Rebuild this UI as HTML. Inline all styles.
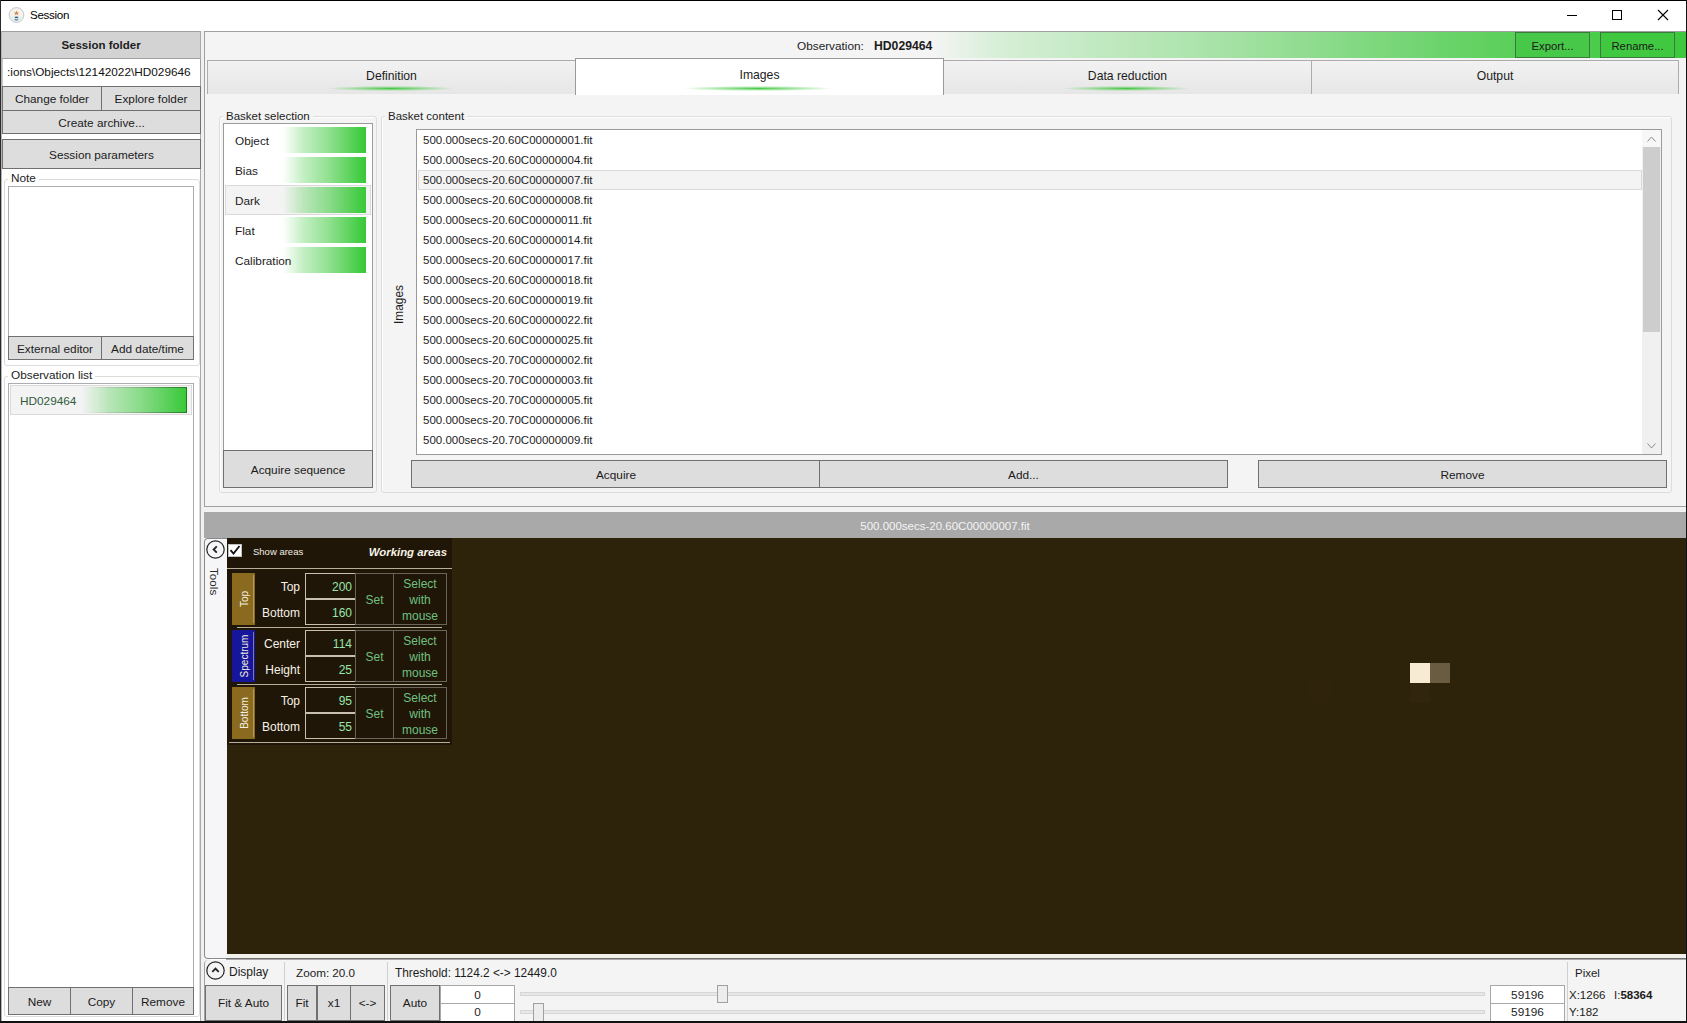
<!DOCTYPE html>
<html><head><meta charset="utf-8">
<style>
*{box-sizing:border-box;margin:0;padding:0}
html,body{width:1687px;height:1023px;overflow:hidden;background:#fff;font-family:"Liberation Sans",sans-serif;font-size:11.8px;color:#1c1c1c}
.a{position:absolute}
.btn{position:absolute;background:#dddddd;border:1px solid #707070;display:flex;align-items:center;justify-content:center;white-space:nowrap;color:#1b1b1b}
.t{position:absolute;white-space:nowrap;line-height:14px}
.gb{position:absolute;border:1px solid #dcdcdc;border-radius:3px}
.lbl{position:absolute;white-space:nowrap;line-height:14px;padding:0 3px}
.gb2{position:absolute;border:1px solid #dcdcdc;border-radius:3px;box-shadow:inset 1px 1px 0 #fff}
.tab{background:linear-gradient(#f2f2f2,#e6e6e6);border:1px solid #acacac;border-bottom:none}
.glow{height:5px;background:radial-gradient(closest-side,rgba(50,195,50,0.9) 0%,rgba(60,200,60,0.45) 50%,rgba(60,200,60,0) 100%)}
.gbar{position:absolute;left:283px;width:83px;height:26px;background:#36c836;-webkit-mask-image:linear-gradient(90deg,transparent 0,rgba(0,0,0,.3) 25%,rgba(0,0,0,.55) 55%,#000 100%)}
</style></head><body>
<!-- window frame -->
<div class="a" style="left:0;top:0;width:1687px;height:1px;background:#000"></div>
<div class="a" style="left:0;top:0;width:1px;height:1023px;background:#2a2a2a"></div>
<div class="a" style="left:1686px;top:0;width:1px;height:1023px;background:#111"></div>
<div class="a" style="left:0;top:1021px;width:1687px;height:2px;background:#111"></div>

<!-- title bar -->
<div id="title">
 <svg class="a" style="left:8px;top:7px" width="17" height="17" viewBox="0 0 17 17">
  <circle cx="8.5" cy="8" r="7.4" fill="#f8f2e8" stroke="#a9b0c4" stroke-width="0.7"/>
  <path d="M1.6 9.5 A7.4 7.4 0 0 0 15.4 9.5 Z" fill="#e0f2ea"/>
  <path d="M8.5 3.6 L9.2 5.4 L11 5.2 L9.7 6.5 L10.4 8.2 L8.5 7.3 L6.6 8.2 L7.3 6.5 L6 5.2 L7.8 5.4 Z" fill="#c98456"/>
  <path d="M6.4 10 Q8.5 9 10.6 10.2 L9.4 11.2 Q8.5 10.8 7.6 11.2 Z M6.2 12.6 Q8.5 14.6 10.8 12.4 L9.6 12.2 Q8.5 13 7.4 12.2 Z" fill="#3d5592"/>
 </svg>
 <div class="t" style="left:30px;top:8px;font-size:11.6px;letter-spacing:-0.3px;color:#000">Session</div>
 <div class="a" style="left:1567px;top:15px;width:10px;height:1px;background:#000"></div>
 <div class="a" style="left:1612px;top:10px;width:10px;height:10px;border:1px solid #000"></div>
 <svg class="a" style="left:1657px;top:9px" width="12" height="12" viewBox="0 0 12 12"><path d="M1 1 L11 11 M11 1 L1 11" stroke="#000" stroke-width="1.1"/></svg>
</div>

<!-- LEFT PANEL -->
<div id="left">
 <div class="a" style="left:1px;top:31px;width:200px;height:990px;background:#fff;border-left:1px solid #b4b4b4;border-right:1px solid #a8a8a8"></div>
 <div class="a" style="left:2px;top:31px;width:198px;height:28px;background:#d3d3d3;border-top:1px solid #a0a0a0;border-bottom:1px solid #a0a0a0"></div>
 <div class="t" style="left:1px;top:38px;width:200px;text-align:center;font-weight:bold;font-size:11.5px">Session folder</div>
 <div class="a" style="left:2px;top:59px;width:199px;height:27px;background:#fff;border-left:1px solid #c8c8c8;border-right:1px solid #a0a0a0"></div>
 <div class="t" style="left:7px;top:65px;font-size:11.8px;color:#111">:ions\Objects\12142022\HD029646</div>
 <div class="btn" style="left:2px;top:86px;width:100px;height:25px">Change folder</div>
 <div class="btn" style="left:101px;top:86px;width:100px;height:25px">Explore folder</div>
 <div class="btn" style="left:2px;top:110px;width:199px;height:24px;padding-top:1px">Create archive...</div>
 <div class="btn" style="left:2px;top:139px;width:199px;height:30px;padding-top:2px">Session parameters</div>

 <div class="gb" style="left:4px;top:179px;width:196px;height:187px"></div>
 <div class="lbl" style="left:8px;top:171px;background:#fff">Note</div>
 <div class="a" style="left:8px;top:186px;width:186px;height:151px;border:1px solid #abadb3;background:#fff"></div>
 <div class="btn" style="left:8px;top:336px;width:94px;height:24px;padding-top:1px">External editor</div>
 <div class="btn" style="left:101px;top:336px;width:93px;height:24px;padding-top:1px">Add date/time</div>

 <div class="gb" style="left:4px;top:376px;width:196px;height:641px"></div>
 <div class="lbl" style="left:8px;top:368px;background:#fff">Observation list</div>
 <div class="a" style="left:8px;top:383px;width:186px;height:605px;border:1px solid #abadb3;background:#fff"></div>
 <div class="a" style="left:10px;top:385px;width:182px;height:30px;background:#f3f3f3;border:1px solid #dadada"></div>
 <div class="a" style="left:82px;top:387px;width:105px;height:26px;background:#36c836;border:1px solid #1f7a1f;border-left:none;-webkit-mask-image:linear-gradient(90deg,transparent 0,rgba(0,0,0,.3) 25%,rgba(0,0,0,.55) 55%,#000 100%)"></div>
 <div class="t" style="left:20px;top:394px;color:#2f5c3c">HD029464</div>
 <div class="btn" style="left:8px;top:987px;width:63px;height:28px;padding-top:1px">New</div>
 <div class="btn" style="left:70px;top:987px;width:63px;height:28px;padding-top:1px">Copy</div>
 <div class="btn" style="left:132px;top:987px;width:62px;height:28px;padding-top:1px">Remove</div>
 <div class="a" style="left:201px;top:31px;width:3px;height:990px;background:#f0f0f0"></div>
</div>

<!-- RIGHT PANEL -->
<div id="right">
 <div class="a" style="left:204px;top:31px;width:1482px;height:476px;background:#f4f4f4;border-left:1px solid #a0a0a0;border-top:1px solid #a0a0a0;border-bottom:1px solid #a0a0a0"></div>
 <!-- observation bar -->
 <div class="a" style="left:205px;top:32px;width:1481px;height:26px;background:linear-gradient(90deg,#f4f4f4 0px,#f4f4f4 728px,#d6efd6 795px,#ace3ac 995px,#5cd05c 1295px,#3cc83c 1481px)"></div>
 <div class="t" style="left:797px;top:39px;font-size:11.8px">Observation:</div>
 <div class="t" style="left:874px;top:39px;font-size:12.2px;font-weight:bold">HD029464</div>
 <div class="btn" style="left:1515px;top:32px;width:75px;height:26px;padding-top:2px;font-size:11.3px;background:#48c848;border-color:#3a7a3a">Export...</div>
 <div class="btn" style="left:1600px;top:32px;width:75px;height:26px;padding-top:2px;font-size:11.3px;background:#40c840;border-color:#3a7a3a">Rename...</div>
 <!-- tabs -->
 <div class="a tab" style="left:207px;top:60px;width:369px;height:34px"></div>
 <div class="a tab" style="left:943px;top:60px;width:369px;height:34px"></div>
 <div class="a tab" style="left:1311px;top:60px;width:368px;height:34px"></div>
 <div class="a" style="left:575px;top:58px;width:369px;height:37px;background:#fff;border:1px solid #9a9a9a;border-bottom:none"></div>
 <div class="a glow" style="left:327px;top:86px;width:128px"></div>
 <div class="a glow" style="left:683px;top:86px;width:150px"></div>
 <div class="a glow" style="left:1062px;top:86px;width:128px"></div>
 <div class="t" style="left:207px;top:69px;width:369px;text-align:center;font-size:12.2px">Definition</div>
 <div class="t" style="left:575px;top:68px;width:369px;text-align:center;font-size:12.2px">Images</div>
 <div class="t" style="left:943px;top:69px;width:369px;text-align:center;font-size:12.2px">Data reduction</div>
 <div class="t" style="left:1311px;top:69px;width:368px;text-align:center;font-size:12.2px">Output</div>

 <!-- basket selection -->
 <div class="gb2" style="left:219px;top:116px;width:158px;height:377px"></div>
 <div class="lbl" style="left:223px;top:109px;background:#f4f4f4;font-size:11.5px">Basket selection</div>
 <div class="a" style="left:223px;top:123px;width:150px;height:338px;background:#fff;border:1px solid #9a9a9a;border-bottom:none"></div>
 <div class="a" style="left:225px;top:185px;width:146px;height:30px;background:#f3f3f3;border:1px solid #dadada"></div>
 <div class="gbar" style="top:127px"></div>
 <div class="gbar" style="top:157px"></div>
 <div class="gbar" style="top:187px"></div>
 <div class="gbar" style="top:217px"></div>
 <div class="gbar" style="top:247px"></div>
 <div class="t" style="left:235px;top:134px">Object</div>
 <div class="t" style="left:235px;top:164px">Bias</div>
 <div class="t" style="left:235px;top:194px">Dark</div>
 <div class="t" style="left:235px;top:224px">Flat</div>
 <div class="t" style="left:235px;top:254px">Calibration</div>
 <div class="btn" style="left:223px;top:450px;width:150px;height:38px;padding-top:1px">Acquire sequence</div>

 <!-- basket content -->
 <div class="gb2" style="left:381px;top:116px;width:1291px;height:377px"></div>
 <div class="lbl" style="left:385px;top:109px;background:#f4f4f4;font-size:11.5px">Basket content</div>
 <div class="t" style="transform:rotate(-90deg);transform-origin:0 0;top:324px;left:392px;font-size:11.9px">Images</div>
 <div class="a" style="left:416px;top:129px;width:1246px;height:326px;background:#fff;border:1px solid #9a9a9a"></div>
 <div class="a" style="left:418px;top:170px;width:1224px;height:20px;background:#f4f4f4;border:1px solid #dadada"></div>
 <div class="a" style="left:1642px;top:130px;width:19px;height:324px;background:#f0f0f0"></div>
 <div class="a" style="left:1642px;top:130px;width:19px;height:17px;background:#f7f7f7"></div>
 <div class="a" style="left:1643px;top:147px;width:17px;height:185px;background:#cdcdcd"></div>
 <svg class="a" style="left:1647px;top:136px" width="9" height="6" viewBox="0 0 9 6"><path d="M0.5 5.5 L4.5 1 L8.5 5.5" fill="none" stroke="#8a8a8a" stroke-width="1"/></svg>
 <svg class="a" style="left:1647px;top:443px" width="9" height="6" viewBox="0 0 9 6"><path d="M0.5 0.5 L4.5 5 L8.5 0.5" fill="none" stroke="#8a8a8a" stroke-width="1"/></svg>
 <div class="t" style="left:423px;top:133px;font-size:11.5px">500.000secs-20.60C00000001.fit</div>
 <div class="t" style="left:423px;top:153px;font-size:11.5px">500.000secs-20.60C00000004.fit</div>
 <div class="t" style="left:423px;top:173px;font-size:11.5px">500.000secs-20.60C00000007.fit</div>
 <div class="t" style="left:423px;top:193px;font-size:11.5px">500.000secs-20.60C00000008.fit</div>
 <div class="t" style="left:423px;top:213px;font-size:11.5px">500.000secs-20.60C00000011.fit</div>
 <div class="t" style="left:423px;top:233px;font-size:11.5px">500.000secs-20.60C00000014.fit</div>
 <div class="t" style="left:423px;top:253px;font-size:11.5px">500.000secs-20.60C00000017.fit</div>
 <div class="t" style="left:423px;top:273px;font-size:11.5px">500.000secs-20.60C00000018.fit</div>
 <div class="t" style="left:423px;top:293px;font-size:11.5px">500.000secs-20.60C00000019.fit</div>
 <div class="t" style="left:423px;top:313px;font-size:11.5px">500.000secs-20.60C00000022.fit</div>
 <div class="t" style="left:423px;top:333px;font-size:11.5px">500.000secs-20.60C00000025.fit</div>
 <div class="t" style="left:423px;top:353px;font-size:11.5px">500.000secs-20.70C00000002.fit</div>
 <div class="t" style="left:423px;top:373px;font-size:11.5px">500.000secs-20.70C00000003.fit</div>
 <div class="t" style="left:423px;top:393px;font-size:11.5px">500.000secs-20.70C00000005.fit</div>
 <div class="t" style="left:423px;top:413px;font-size:11.5px">500.000secs-20.70C00000006.fit</div>
 <div class="t" style="left:423px;top:433px;font-size:11.5px">500.000secs-20.70C00000009.fit</div>
 <div class="btn" style="left:411px;top:460px;width:410px;height:28px;padding-top:1px">Acquire</div>
 <div class="btn" style="left:819px;top:460px;width:409px;height:28px;padding-top:1px">Add...</div>
 <div class="btn" style="left:1258px;top:460px;width:409px;height:28px;padding-top:1px">Remove</div>
</div>

<!-- IMAGE VIEWER -->
<div id="viewer">
 <div class="a" style="left:204px;top:507px;width:1482px;height:5px;background:#f2f2f2"></div>
 <div class="a" style="left:204px;top:512px;width:1482px;height:26px;background:#a9a9a9"></div>
 <div class="t" style="left:204px;top:519px;width:1482px;text-align:center;color:#f4f4f4;font-size:11.5px">500.000secs-20.60C00000007.fit</div>
 
 <div class="a" style="left:204px;top:538px;width:23px;height:421px;background:#f6f6f8;border:1px solid #8a8a8a;border-right:none;border-radius:4px 0 0 4px"></div>
 <svg class="a" style="left:205px;top:539px" width="21" height="21" viewBox="0 0 21 21"><circle cx="10.5" cy="10.5" r="8.7" fill="none" stroke="#222" stroke-width="1.2"/><path d="M11.8 7.3 L8.6 10.5 L11.8 13.7" fill="none" stroke="#222" stroke-width="1.8"/></svg>
 <div class="t" style="left:206px;top:568px;transform:rotate(90deg);transform-origin:0 0;left:221px;font-size:11.7px;color:#2a2a2a">Tools</div>
 <div class="a" style="left:227px;top:538px;width:1459px;height:416px;background:#2d220a"></div>
 <div class="a" style="left:1410px;top:663px;width:20px;height:20px;background:#f7ebd4"></div>
 <div class="a" style="left:1430px;top:663px;width:20px;height:20px;background:#6a5c40"></div>
 <div class="a" style="left:1410px;top:683px;width:20px;height:20px;background:#31260d"></div>
 <div class="a" style="left:1310px;top:680px;width:20px;height:23px;background:#2f240b"></div>
 <div class="a" style="left:227px;top:954px;width:1459px;height:4px;background:#f2f0ea"></div>
 <div class="a" style="left:226px;top:958px;width:1460px;height:2px;background:linear-gradient(#6e6e6e 0,#6e6e6e 50%,#a8a8a8 50%)"></div>

 <!-- working areas panel -->
 <div class="a" style="left:227px;top:538px;width:225px;height:207px;background:#1f1608"></div>
 <div class="a" style="left:228px;top:544px;width:14px;height:13px;background:#fff;border:1px solid #c0c0c0"></div>
 <svg class="a" style="left:228px;top:543px" width="14" height="14" viewBox="0 0 14 14"><path d="M2.5 7.2 L5.5 10.5 L11.5 3" fill="none" stroke="#111" stroke-width="1.8"/></svg>
 <div class="t" style="left:253px;top:545px;font-size:9.5px;color:#f0ece0">Show areas</div>
 <div class="t" style="left:300px;top:545px;width:147px;text-align:right;font-size:11.4px;font-weight:bold;font-style:italic;color:#f6f2e6">Working areas</div>
 <div class="a" style="left:227px;top:568px;width:225px;height:1px;background:#b8ad98"></div>
 <div class="a" style="left:232px;top:573px;width:23px;height:52px;background:#8a6a1e"></div>
 <div class="a" style="left:253px;top:575px;width:1px;height:48px;background:#b49a5e"></div>
 <div class="t" style="left:235px;top:599px;width:0;height:0"><div style="position:absolute;transform:translate(-50%,-50%) rotate(-90deg);font-size:10px;color:#f4efe0;white-space:nowrap;left:10px;top:0">Top</div></div>
 <div class="t" style="left:240px;top:580px;width:60px;text-align:right;font-size:12px;color:#f6f2e6">Top</div>
 <div class="a" style="left:305px;top:573px;width:51px;height:26px;border:1px solid #c8c0b0;background:#1f1608"></div>
 <div class="t" style="left:305px;top:580px;width:47px;text-align:right;font-size:12px;color:#98e6aa">200</div>
 <div class="t" style="left:240px;top:606px;width:60px;text-align:right;font-size:12px;color:#f6f2e6">Bottom</div>
 <div class="a" style="left:305px;top:599px;width:51px;height:26px;border:1px solid #c8c0b0;background:#1f1608"></div>
 <div class="t" style="left:305px;top:606px;width:47px;text-align:right;font-size:12px;color:#98e6aa">160</div>
 <div class="a" style="left:355px;top:573px;width:39px;height:52px;border:1px solid #6a6456"></div>
 <div class="t" style="left:355px;top:593px;width:39px;text-align:center;font-size:12px;color:#70c080">Set</div>
 <div class="a" style="left:393px;top:573px;width:54px;height:52px;border:1px solid #6a6456"></div>
 <div class="t" style="left:393px;top:576px;width:54px;text-align:center;font-size:12px;line-height:16px;color:#70c080;white-space:normal">Select<br>with<br>mouse</div>
 <div class="a" style="left:237px;top:627px;width:205px;height:1px;background:#b8ad98"></div>
 <div class="a" style="left:232px;top:630px;width:23px;height:52px;background:#16169a"></div>
 <div class="a" style="left:253px;top:632px;width:1px;height:48px;background:#7878c0"></div>
 <div class="t" style="left:235px;top:656px;width:0;height:0"><div style="position:absolute;transform:translate(-50%,-50%) rotate(-90deg);font-size:10px;color:#f4efe0;white-space:nowrap;left:10px;top:0">Spectrum</div></div>
 <div class="t" style="left:240px;top:637px;width:60px;text-align:right;font-size:12px;color:#f6f2e6">Center</div>
 <div class="a" style="left:305px;top:630px;width:51px;height:26px;border:1px solid #c8c0b0;background:#1f1608"></div>
 <div class="t" style="left:305px;top:637px;width:47px;text-align:right;font-size:12px;color:#98e6aa">114</div>
 <div class="t" style="left:240px;top:663px;width:60px;text-align:right;font-size:12px;color:#f6f2e6">Height</div>
 <div class="a" style="left:305px;top:656px;width:51px;height:26px;border:1px solid #c8c0b0;background:#1f1608"></div>
 <div class="t" style="left:305px;top:663px;width:47px;text-align:right;font-size:12px;color:#98e6aa">25</div>
 <div class="a" style="left:355px;top:630px;width:39px;height:52px;border:1px solid #6a6456"></div>
 <div class="t" style="left:355px;top:650px;width:39px;text-align:center;font-size:12px;color:#70c080">Set</div>
 <div class="a" style="left:393px;top:630px;width:54px;height:52px;border:1px solid #6a6456"></div>
 <div class="t" style="left:393px;top:633px;width:54px;text-align:center;font-size:12px;line-height:16px;color:#70c080;white-space:normal">Select<br>with<br>mouse</div>
 <div class="a" style="left:237px;top:684px;width:205px;height:1px;background:#b8ad98"></div>
 <div class="a" style="left:232px;top:687px;width:23px;height:52px;background:#8a6a1e"></div>
 <div class="a" style="left:253px;top:689px;width:1px;height:48px;background:#b49a5e"></div>
 <div class="t" style="left:235px;top:713px;width:0;height:0"><div style="position:absolute;transform:translate(-50%,-50%) rotate(-90deg);font-size:10px;color:#f4efe0;white-space:nowrap;left:10px;top:0">Bottom</div></div>
 <div class="t" style="left:240px;top:694px;width:60px;text-align:right;font-size:12px;color:#f6f2e6">Top</div>
 <div class="a" style="left:305px;top:687px;width:51px;height:26px;border:1px solid #c8c0b0;background:#1f1608"></div>
 <div class="t" style="left:305px;top:694px;width:47px;text-align:right;font-size:12px;color:#98e6aa">95</div>
 <div class="t" style="left:240px;top:720px;width:60px;text-align:right;font-size:12px;color:#f6f2e6">Bottom</div>
 <div class="a" style="left:305px;top:713px;width:51px;height:26px;border:1px solid #c8c0b0;background:#1f1608"></div>
 <div class="t" style="left:305px;top:720px;width:47px;text-align:right;font-size:12px;color:#98e6aa">55</div>
 <div class="a" style="left:355px;top:687px;width:39px;height:52px;border:1px solid #6a6456"></div>
 <div class="t" style="left:355px;top:707px;width:39px;text-align:center;font-size:12px;color:#70c080">Set</div>
 <div class="a" style="left:393px;top:687px;width:54px;height:52px;border:1px solid #6a6456"></div>
 <div class="t" style="left:393px;top:690px;width:54px;text-align:center;font-size:12px;line-height:16px;color:#70c080;white-space:normal">Select<br>with<br>mouse</div>
 <div class="a" style="left:229px;top:742px;width:221px;height:1px;background:#b8ad98"></div>
</div>

<!-- DISPLAY BAR -->
<div id="display">
 <div class="a" style="left:204px;top:960px;width:1482px;height:61px;background:#f4f4f4;border-left:1px solid #a0a0a0;border-top-left-radius:4px"></div>
 <div class="a" style="left:204px;top:959px;width:6px;height:1px;background:#f4f4f4"></div>
 <svg class="a" style="left:205px;top:960px" width="21" height="21" viewBox="0 0 21 21"><circle cx="10.5" cy="10.5" r="8.7" fill="none" stroke="#222" stroke-width="1.2"/><path d="M7.3 11.8 L10.5 8.6 L13.7 11.8" fill="none" stroke="#222" stroke-width="1.8"/></svg>
 <div class="t" style="left:229px;top:965px;font-size:12px">Display</div>
 <div class="a" style="left:284px;top:962px;width:1px;height:59px;background:#d0d0d0"></div>
 <div class="t" style="left:296px;top:966px;font-size:11.7px">Zoom: 20.0</div>
 <div class="a" style="left:387px;top:962px;width:1px;height:59px;background:#d0d0d0"></div>
 <div class="t" style="left:395px;top:966px;font-size:11.85px">Threshold: 1124.2 &lt;-&gt; 12449.0</div>
 <div class="a" style="left:1567px;top:962px;width:1px;height:59px;background:#d0d0d0"></div>
 <div class="btn" style="left:205px;top:985px;width:77px;height:36px">Fit &amp; Auto</div>
 <div class="btn" style="left:287px;top:985px;width:30px;height:36px">Fit</div>
 <div class="btn" style="left:317px;top:985px;width:34px;height:36px">x1</div>
 <div class="btn" style="left:350px;top:985px;width:35px;height:36px">&lt;-&gt;</div>
 <div class="btn" style="left:390px;top:985px;width:50px;height:36px">Auto</div>
 <div class="a" style="left:440px;top:985px;width:75px;height:19px;background:#fff;border:1px solid #a8a8a8"></div>
 <div class="a" style="left:440px;top:1003px;width:75px;height:18px;background:#fff;border:1px solid #a8a8a8;border-bottom:none"></div>
 <div class="t" style="left:440px;top:988px;width:75px;text-align:center">0</div>
 <div class="t" style="left:440px;top:1005px;width:75px;text-align:center">0</div>
 <div class="a" style="left:520px;top:992px;width:965px;height:4px;background:#e7e7e7;border:1px solid #d6d6d6"></div>
 <div class="a" style="left:520px;top:1010px;width:965px;height:4px;background:#e7e7e7;border:1px solid #d6d6d6"></div>
 <div class="a" style="left:717px;top:985px;width:11px;height:18px;background:#ececec;border:1px solid #a0a0a0"></div>
 <div class="a" style="left:533px;top:1003px;width:11px;height:18px;background:#ececec;border:1px solid #a0a0a0;border-bottom:none"></div>
 <div class="a" style="left:1490px;top:985px;width:75px;height:19px;background:#fff;border:1px solid #a8a8a8"></div>
 <div class="a" style="left:1490px;top:1003px;width:75px;height:18px;background:#fff;border:1px solid #a8a8a8;border-bottom:none"></div>
 <div class="t" style="left:1490px;top:988px;width:75px;text-align:center">59196</div>
 <div class="t" style="left:1490px;top:1005px;width:75px;text-align:center">59196</div>
 <div class="t" style="left:1575px;top:966px;font-size:11.5px">Pixel</div>
 <div class="t" style="left:1569px;top:988px;font-size:11.5px">X:1266</div>
 <div class="t" style="left:1614px;top:988px;font-size:11.5px">I:<b>58364</b></div>
 <div class="t" style="left:1569px;top:1005px;font-size:11.5px">Y:182</div>
</div>
</body></html>
